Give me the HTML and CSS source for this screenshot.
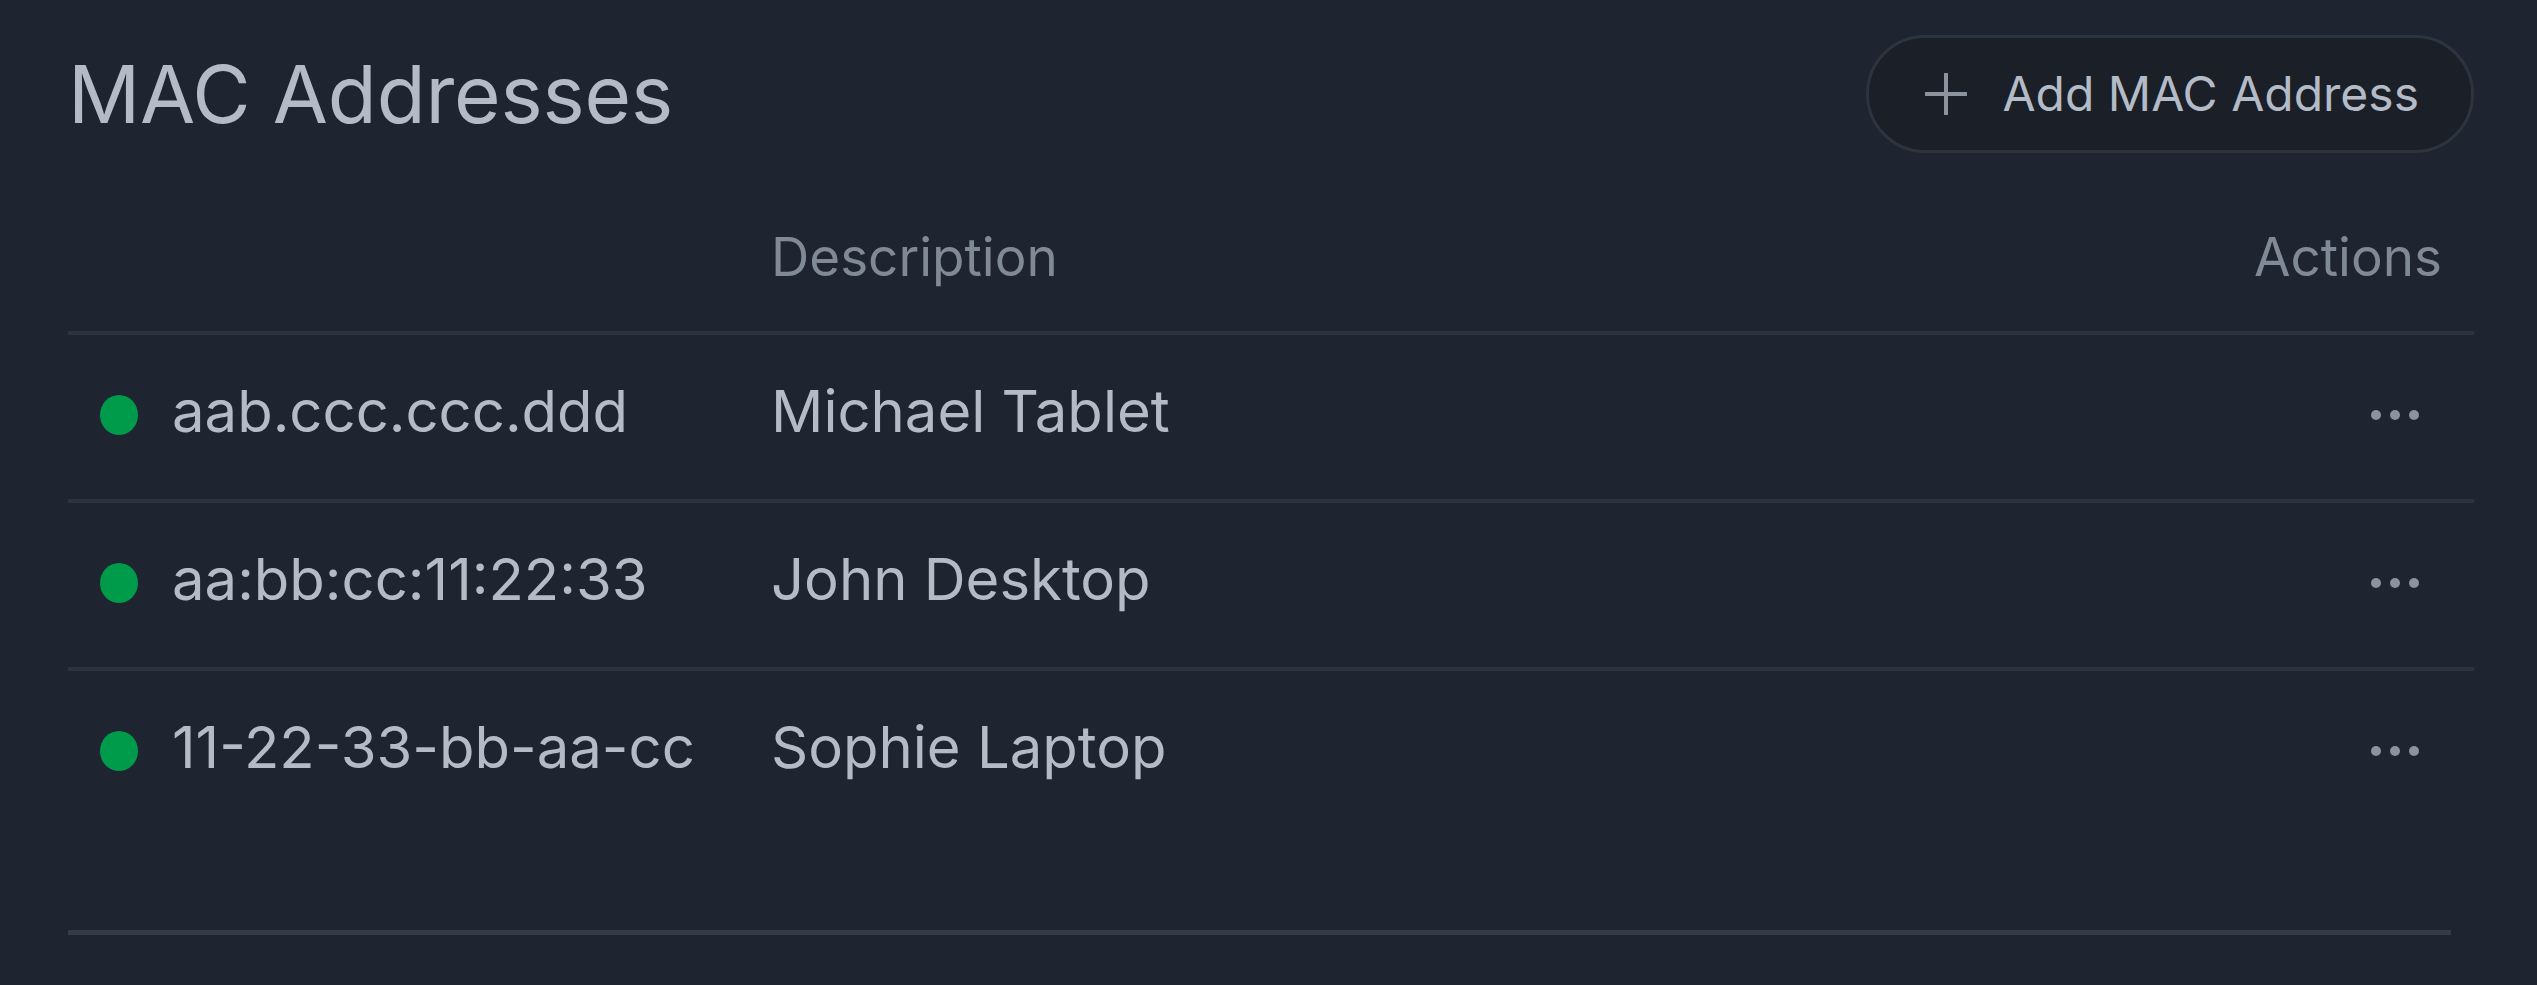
FILE: index.html
```html
<!DOCTYPE html>
<html lang="en">
<head>
<meta charset="utf-8">
<title>MAC Addresses</title>
<link rel="stylesheet" href="styles.css">
</head>
<body>
<main class="page">
  <header class="top">
    <h1 class="title">MAC Addresses</h1>
    <button class="add-btn" type="button">
      <svg class="plus" viewBox="0 0 42 42" width="42" height="42" aria-hidden="true">
        <path d="M21 1V41M1 21H41" stroke="currentColor" stroke-width="4" stroke-linecap="round" fill="none"/>
      </svg>
      <span>Add MAC Address</span>
    </button>
  </header>

  <section class="table">
    <div class="row head">
      <div class="cell mac"></div>
      <div class="cell desc">Description</div>
      <div class="cell actions">Actions</div>
    </div>

    <div class="row">
      <div class="cell mac"><span class="dot"></span><span class="addr">aab.ccc.ccc.ddd</span></div>
      <div class="cell desc">Michael Tablet</div>
      <div class="cell actions"><button class="more" type="button" aria-label="More"><i></i><i></i><i></i></button></div>
    </div>
    <div class="row">
      <div class="cell mac"><span class="dot"></span><span class="addr">aa:bb:cc:11:22:33</span></div>
      <div class="cell desc">John Desktop</div>
      <div class="cell actions"><button class="more" type="button" aria-label="More"><i></i><i></i><i></i></button></div>
    </div>
    <div class="row last">
      <div class="cell mac"><span class="dot"></span><span class="addr">11-22-33-bb-aa-cc</span></div>
      <div class="cell desc">Sophie Laptop</div>
      <div class="cell actions"><button class="more" type="button" aria-label="More"><i></i><i></i><i></i></button></div>
    </div>
  </section>

  <div class="bottom-rule"></div>
</main>
</body>
</html>
```

FILE: styles.css
```css
* { box-sizing: border-box; }

html, body {
  margin: 0;
  padding: 0;
  background: #1e2430;
}

body {
  font-family: Inter, "Noto Sans", "Liberation Sans", sans-serif;
  color: #b3bbc6;
}

.page {
  padding: 35px 63px 0 68px;
  min-height: 985px;
}

.top {
  display: flex;
  align-items: center;
  justify-content: space-between;
  height: 118px;
}

.title {
  margin: 0;
  font-size: 80px;
  line-height: 80px;
  font-weight: 400;
  color: #b3bbc6;
  letter-spacing: -0.2px;
}

.add-btn {
  display: flex;
  align-items: center;
  gap: 35px;
  height: 118px;
  padding: 0 52px 0 56px;
  border: 3px solid #2c3440;
  border-radius: 59px;
  background: #1a1f28;
  color: #b3bbc6;
  font-family: inherit;
  font-size: 48px;
  line-height: 1;
  font-weight: 400;
  cursor: pointer;
}

.plus {
  color: #8a939e;
  flex: none;
}

.row {
  display: flex;
  align-items: center;
  height: 168px;
  padding-bottom: 12px;
  border-bottom: 4px solid #2b333e;
  font-size: 58px;
  line-height: 68px;
}

.row.last {
  border-bottom: none;
  height: 164px;
}

.row.head {
  height: auto;
  padding: 72px 0 42px;
  font-size: 53px;
  line-height: 64px;
  color: #7f8a96;
  align-items: flex-start;
}

.cell.mac {
  width: 703px;
  flex: none;
  display: flex;
  align-items: center;
  gap: 34px;
  padding-left: 32px;
}

.addr {
  white-space: nowrap;
}

.cell.desc {
  flex: 1;
}

.cell.actions {
  flex: none;
  padding-right: 32px;
  display: flex;
  justify-content: flex-end;
}

.dot {
  width: 38px;
  height: 40px;
  border-radius: 50%;
  background: #009a4b;
  flex: none;
  margin-top: 8px;
}

.more {
  width: 94px;
  height: 40px;
  margin-top: 8px;
  padding: 0;
  border: none;
  background: transparent;
  display: flex;
  align-items: center;
  justify-content: center;
  gap: 9px;
  cursor: pointer;
}

.more i {
  display: block;
  width: 10px;
  height: 10px;
  border-radius: 50%;
  background: #8a939e;
}

.bottom-rule {
  margin: 95px 23px 0 0;
  height: 5px;
  background: #333c48;
}
```
